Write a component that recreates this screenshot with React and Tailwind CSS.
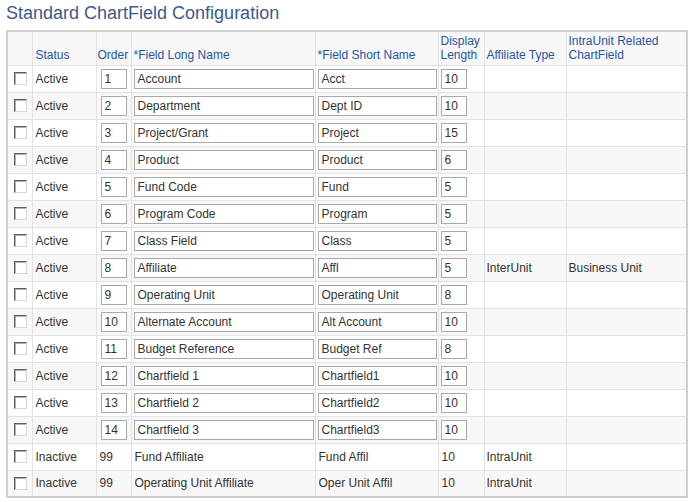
const rows = [
  { status: "Active", order: "1", long: "Account", short: "Acct", len: "10", edit: true },
  { status: "Active", order: "2", long: "Department", short: "Dept ID", len: "10", edit: true },
  { status: "Active", order: "3", long: "Project/Grant", short: "Project", len: "15", edit: true },
  { status: "Active", order: "4", long: "Product", short: "Product", len: "6", edit: true },
  { status: "Active", order: "5", long: "Fund Code", short: "Fund", len: "5", edit: true },
  { status: "Active", order: "6", long: "Program Code", short: "Program", len: "5", edit: true },
  { status: "Active", order: "7", long: "Class Field", short: "Class", len: "5", edit: true },
  { status: "Active", order: "8", long: "Affiliate", short: "Affl", len: "5", edit: true, aff: "InterUnit", rel: "Business Unit" },
  { status: "Active", order: "9", long: "Operating Unit", short: "Operating Unit", len: "8", edit: true },
  { status: "Active", order: "10", long: "Alternate Account", short: "Alt Account", len: "10", edit: true },
  { status: "Active", order: "11", long: "Budget Reference", short: "Budget Ref", len: "8", edit: true },
  { status: "Active", order: "12", long: "Chartfield 1", short: "Chartfield1", len: "10", edit: true },
  { status: "Active", order: "13", long: "Chartfield 2", short: "Chartfield2", len: "10", edit: true },
  { status: "Active", order: "14", long: "Chartfield 3", short: "Chartfield3", len: "10", edit: true },
  { status: "Inactive", order: "99", long: "Fund Affiliate", short: "Fund Affil", len: "10", aff: "IntraUnit" },
  { status: "Inactive", order: "99", long: "Operating Unit Affiliate", short: "Oper Unit Affil", len: "10", aff: "IntraUnit" },
];

function Box({ value, width }) {
  return (
    <div
      className={`h-[20px] ${width} border border-[#a9a9a9] bg-white pl-[3px] leading-[18px] text-[#333] overflow-hidden whitespace-nowrap`}
    >
      {value}
    </div>
  );
}

function Check() {
  return (
    <span className="block w-[13px] h-[13px] bg-white border-t border-l border-t-[#5e5e5e] border-l-[#5e5e5e] border-r border-b border-r-[#d6d6d6] border-b-[#d6d6d6] shadow-[inset_1px_1px_0_#b0b0b0]" />
  );
}

export default function App() {
  const th = "align-bottom text-left font-normal text-[#2456a6] leading-[14px] pb-[3px] border-r border-[#e2e2e2]";
  const td = "border-r border-[#e2e2e2] align-middle";
  return (
    <div className="bg-white w-[696px] h-[502px] pl-[6px] pt-[3px] font-[family-name:'Liberation_Sans',Arial,sans-serif] text-[12px] text-[#333]">
      <h1 className="text-[18px] leading-[21px] text-[#3c5b8c] mb-[6px]">Standard ChartField Configuration</h1>
      <table className="border-collapse table-fixed w-[680px] border-2 border-[#cfcfcf]">
        <colgroup>
          <col className="w-[25px]" />
          <col className="w-[64px]" />
          <col className="w-[35px]" />
          <col className="w-[184px]" />
          <col className="w-[123px]" />
          <col className="w-[46px]" />
          <col className="w-[82px]" />
          <col className="w-[121px]" />
        </colgroup>
        <thead>
          <tr className="h-[34px] bg-[#f7f7f7] border-b border-[#e2e2e2]">
            <th className={th}></th>
            <th className={`${th} pl-[3px]`}>Status</th>
            <th className={`${th} pl-[1px]`}>Order</th>
            <th className={`${th} pl-[2px]`}>*Field Long Name</th>
            <th className={`${th} pl-[2px]`}>*Field Short Name</th>
            <th className={`${th} pl-[2px]`}>Display<br />Length</th>
            <th className={`${th} pl-[2px]`}>Affiliate Type</th>
            <th className={`${th} pl-[2px]`}>IntraUnit Related<br />ChartField</th>
          </tr>
        </thead>
        <tbody>
          {rows.map((r, i) => (
            <tr key={i} className={`h-[27px] border-b border-[#e2e2e2] ${i % 2 ? "bg-[#f7f7f7]" : "bg-white"}`}>
              <td className={`${td} pl-[6px]`}><Check /></td>
              <td className={`${td} pl-[3px]`}>{r.status}</td>
              <td className={`${td} ${r.edit ? "pl-[4px]" : "pl-[3px]"}`}>
                {r.edit ? <Box value={r.order} width="w-[26px]" /> : r.order}
              </td>
              <td className={`${td} pl-[2px]`}>
                {r.edit ? <Box value={r.long} width="w-[180px]" /> : <span className="pl-[1px]">{r.long}</span>}
              </td>
              <td className={`${td} pl-[2px]`}>
                {r.edit ? <Box value={r.short} width="w-[119px]" /> : <span className="pl-[1px]">{r.short}</span>}
              </td>
              <td className={`${td} pl-[2px]`}>
                {r.edit ? <Box value={r.len} width="w-[26px]" /> : <span className="pl-[1px]">{r.len}</span>}
              </td>
              <td className={`${td} pl-[2px]`}>{r.aff}</td>
              <td className={`${td} pl-[2px]`}>{r.rel}</td>
            </tr>
          ))}
        </tbody>
      </table>
    </div>
  );
}
